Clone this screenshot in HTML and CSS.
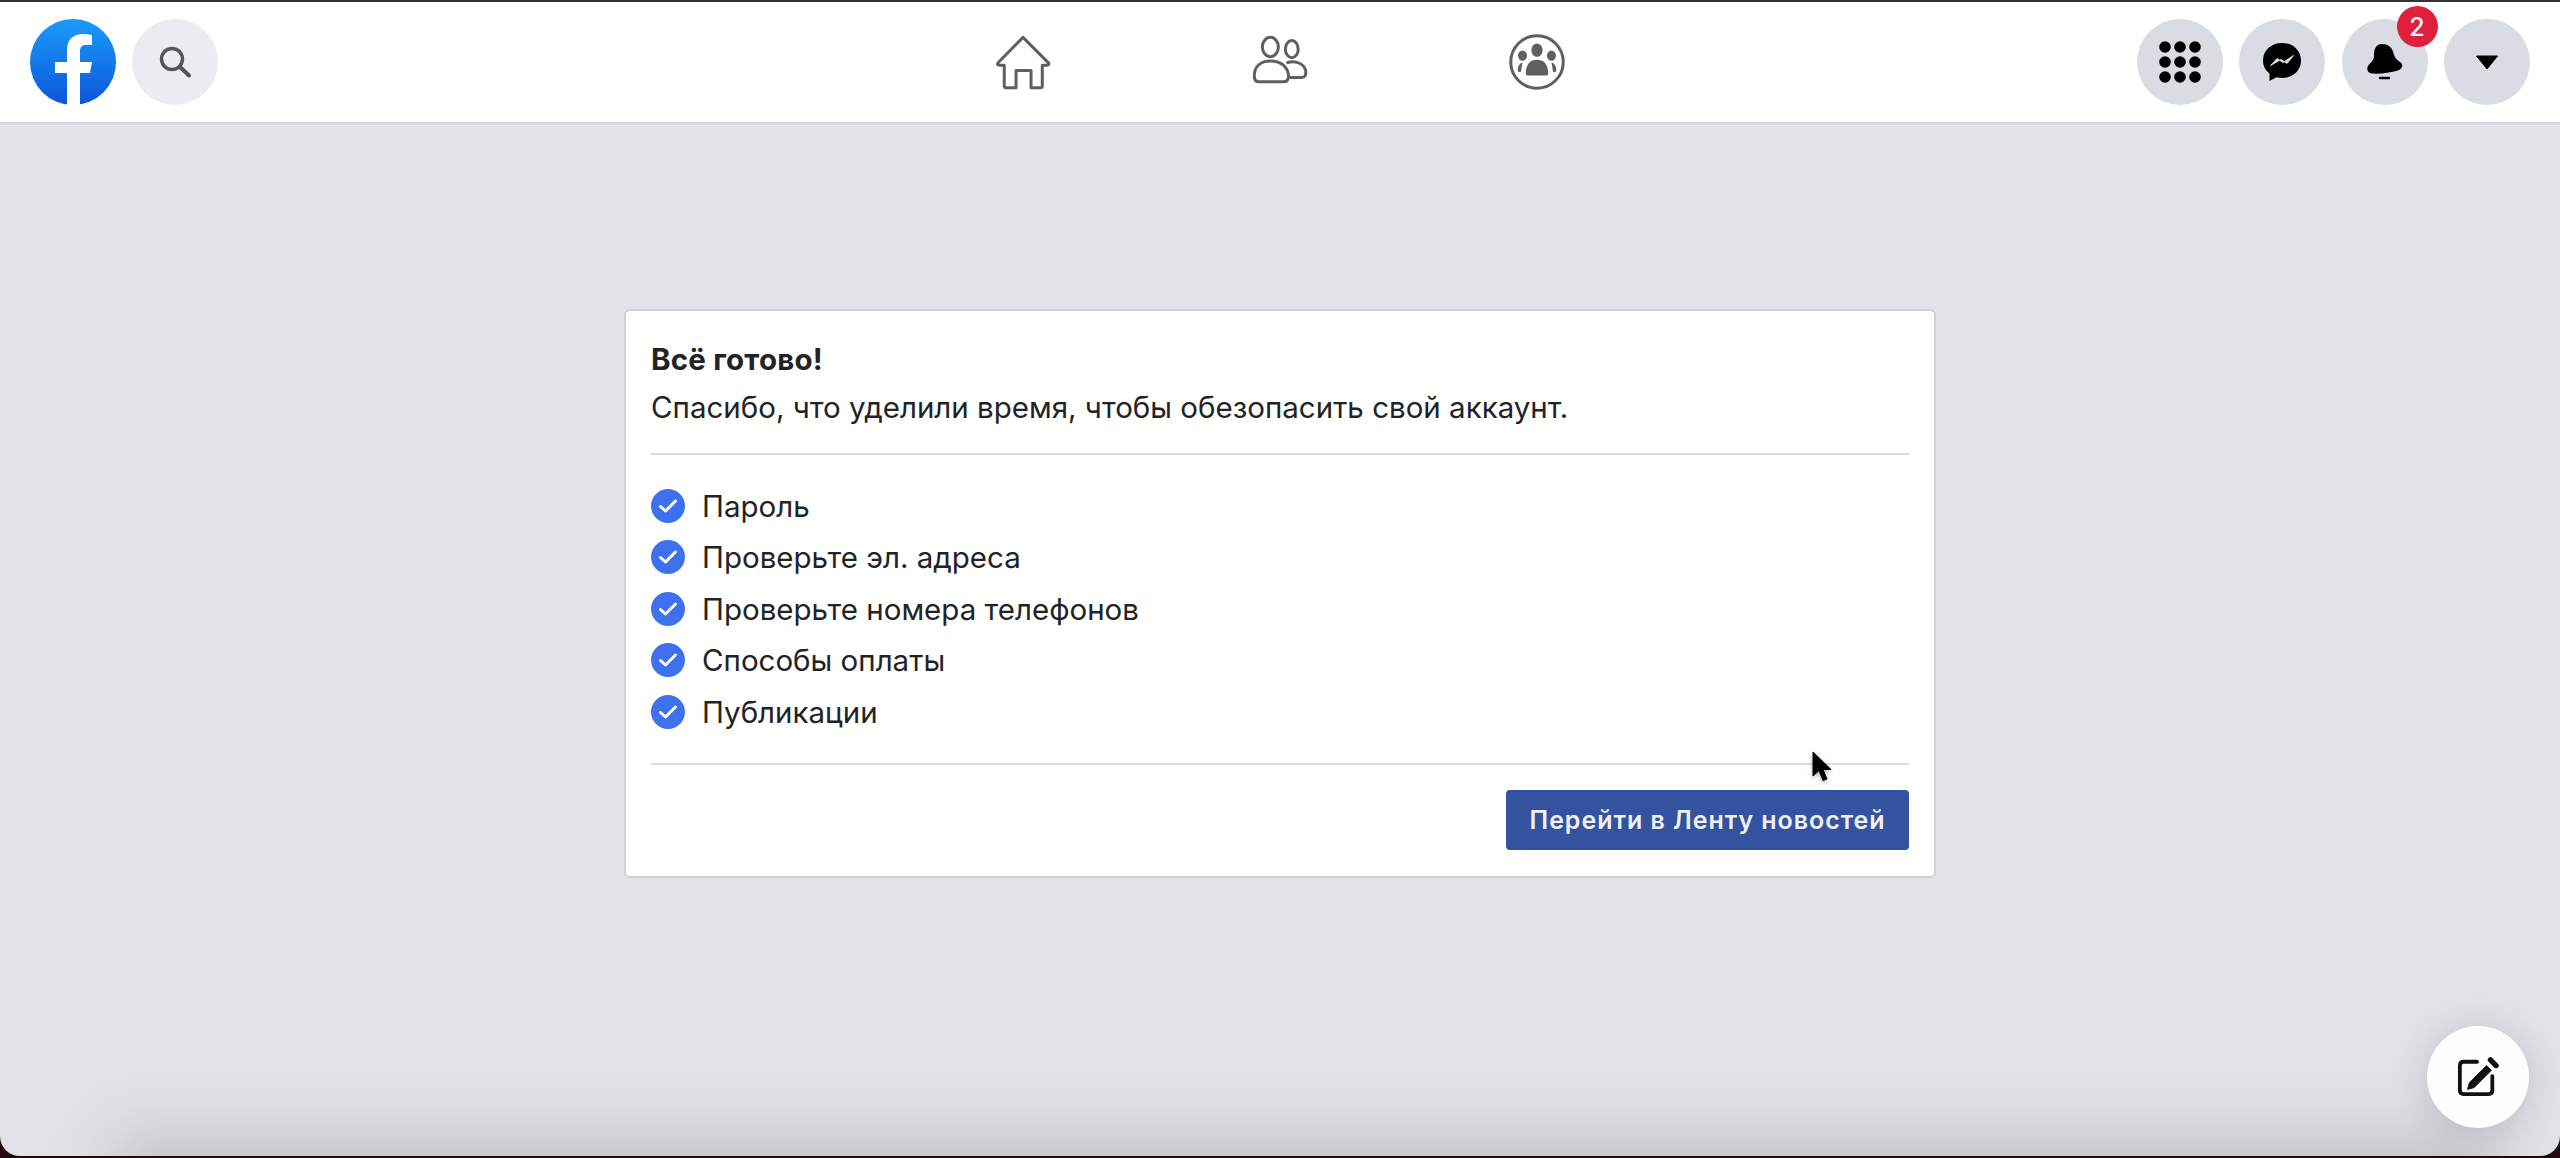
FILE: index.html
```html
<!DOCTYPE html>
<html lang="ru">
<head>
<meta charset="utf-8">
<title>Всё готово</title>
<link rel="stylesheet" href="styles.css">
</head>
<body>
<div class="window">
  <header class="topbar">
    <div class="left-group">
      <svg class="logo" viewBox="0 0 86 86" aria-hidden="true">
        <defs><linearGradient id="fbg" x1="0" y1="0" x2="0" y2="1"><stop offset="0" stop-color="#1a9cfb"/><stop offset="1" stop-color="#0d55d8"/></linearGradient></defs>
        <circle cx="43" cy="43" r="43" fill="url(#fbg)"/>
        <path d="M37 86V54H25V43H37V31C37 20 43.500 15 53 15C57 15 60 15.500 62 16V26H56C51.500 26 50 28.500 50 32V43H62L60 54H50V86Z" fill="#fff"/>
      </svg>
      <div class="round round-light">
        <svg class="ico-search" viewBox="0 0 36 36" aria-hidden="true"><circle cx="15" cy="15" r="10.500" fill="none" stroke="#555" stroke-width="3.400"/><path d="M23 23L32 31.500" stroke="#555" stroke-width="4" stroke-linecap="round"/></svg>
      </div>
    </div>
    <nav class="nav">
      <div class="nav-item">
        <svg class="ico-nav" viewBox="0 0 56 56" aria-hidden="true"><path d="M28 5L52 29Q52.500 31 50.500 31H46V50.500Q46 52 44.500 52H35.500V36H21.500V52H12Q10.500 52 10.500 50.500V31H6Q3.500 31 4.500 29Z" fill="none" stroke="#5f5f62" stroke-width="2.800" stroke-linejoin="round"/></svg>
      </div>
      <div class="nav-item">
        <svg class="ico-nav" viewBox="0 0 56 56" aria-hidden="true"><g fill="none" stroke="#5f5f62" stroke-width="2.800"><ellipse cx="19" cy="14" rx="7.500" ry="9"/><ellipse cx="39" cy="16" rx="6" ry="8"/><path d="M34 29C40 26.500 50 28 52 36Q53 42.500 48 42.500H37"/><path d="M4 41C4 32 10 27 19.500 27C29 27 35.500 33 36 41Q36 46.500 31 46.500H8.500Q4 46.500 4 41Z"/></g></svg>
      </div>
      <div class="nav-item">
        <svg class="ico-nav" viewBox="0 0 56 56" aria-hidden="true"><circle cx="28" cy="28" r="24.500" fill="none" stroke="#5f5f62" stroke-width="2.800"/><g fill="#5f5f62"><ellipse cx="28" cy="17" rx="5.200" ry="6.200"/><ellipse cx="14.500" cy="22" rx="4.200" ry="4.800"/><ellipse cx="41.500" cy="22" rx="4.200" ry="4.800"/><path d="M17.500 39C17.500 30 22 26 28 26C34 26 38.500 30 38.500 39Q38.500 40.500 36.500 40.500H19.500Q17.500 40.500 17.500 39Z"/><path d="M10 36C10 32 11.500 29.500 14.500 28.500L13 37Q10 38 10 36Z"/><path d="M46 36C46 32 44.500 29.500 41.500 28.500L43 37Q46 38 46 36Z"/></g></svg>
      </div>
    </nav>
    <div class="right-group">
      <div class="round">
        <svg class="ico-grid" viewBox="0 0 44 44" aria-hidden="true"><g fill="#000"><circle cx="7" cy="7" r="5.800"/><circle cx="22" cy="7" r="5.800"/><circle cx="37" cy="7" r="5.800"/><circle cx="7" cy="22" r="5.800"/><circle cx="22" cy="22" r="5.800"/><circle cx="37" cy="22" r="5.800"/><circle cx="7" cy="37" r="5.800"/><circle cx="22" cy="37" r="5.800"/><circle cx="37" cy="37" r="5.800"/></g></svg>
      </div>
      <div class="round">
        <svg class="ico-msg" viewBox="0 0 40 40" aria-hidden="true"><path d="M20 1C9 1 1 8.500 1 18.500C1 24 3.500 28.500 7.500 31.500V39L14.500 35.200C16.200 35.700 18 36 20 36C31 36 39 28.500 39 18.500C39 8.500 31 1 20 1Z" fill="#000"/><path d="M8.500 23.500L15 16.500L21 20.500L31.500 13.500L25 21.500L19 17.500Z" fill="#dadce3" stroke="#dadce3" stroke-linejoin="round"/></svg>
      </div>
      <div class="round has-badge">
        <svg class="ico-bell" viewBox="0 0 36 38" aria-hidden="true"><path d="M15 1C8.500 1 7 7 7 12C7 17 5 18.500 2 21.500C-1 25 0 30 5 30.500C13 31 23 30 31 27.500C36 25.500 36.500 21 33 19C29 16 27.500 14 26.500 10C25 4 20.500 1 15 1Z" fill="#000"/><path d="M13 35H22" stroke="#000" stroke-width="2.400" stroke-linecap="round"/></svg>
        <span class="badge">2</span>
      </div>
      <div class="round">
        <svg class="ico-caret" viewBox="0 0 24 15" aria-hidden="true"><path d="M1.500 1H22.500L12 14Z" fill="#000" stroke="#000" stroke-linejoin="round"/></svg>
      </div>
    </div>
  </header>

  <main class="content">
    <section class="card">
      <h1 class="card-title">Всё готово!</h1>
      <p class="card-sub">Спасибо, что уделили время, чтобы обезопасить свой аккаунт.</p>
      <ul class="checks">
        <li class="check"><svg class="tick" viewBox="0 0 34 34" aria-hidden="true"><circle cx="17" cy="17" r="17" fill="#3f71ee"/><path d="M9.500 17.500L14.500 22L24.500 12" fill="none" stroke="#fff" stroke-width="3" stroke-linecap="round" stroke-linejoin="round"/></svg>Пароль</li>
        <li class="check"><svg class="tick" viewBox="0 0 34 34" aria-hidden="true"><circle cx="17" cy="17" r="17" fill="#3f71ee"/><path d="M9.500 17.500L14.500 22L24.500 12" fill="none" stroke="#fff" stroke-width="3" stroke-linecap="round" stroke-linejoin="round"/></svg>Проверьте эл. адреса</li>
        <li class="check"><svg class="tick" viewBox="0 0 34 34" aria-hidden="true"><circle cx="17" cy="17" r="17" fill="#3f71ee"/><path d="M9.500 17.500L14.500 22L24.500 12" fill="none" stroke="#fff" stroke-width="3" stroke-linecap="round" stroke-linejoin="round"/></svg>Проверьте номера телефонов</li>
        <li class="check"><svg class="tick" viewBox="0 0 34 34" aria-hidden="true"><circle cx="17" cy="17" r="17" fill="#3f71ee"/><path d="M9.500 17.500L14.500 22L24.500 12" fill="none" stroke="#fff" stroke-width="3" stroke-linecap="round" stroke-linejoin="round"/></svg>Способы оплаты</li>
        <li class="check"><svg class="tick" viewBox="0 0 34 34" aria-hidden="true"><circle cx="17" cy="17" r="17" fill="#3f71ee"/><path d="M9.500 17.500L14.500 22L24.500 12" fill="none" stroke="#fff" stroke-width="3" stroke-linecap="round" stroke-linejoin="round"/></svg>Публикации</li>
      </ul>
      <div class="card-foot"><button class="cta" type="button">Перейти в Ленту новостей</button></div>
    </section>
  </main>

  <svg class="cursor" viewBox="0 0 22 32" aria-hidden="true"><path d="M1 1V25L7 19.500L11 29.500L15 28L11 18.500H19Z" fill="#000" stroke="#000" stroke-linejoin="round"/></svg>
  <div class="fab">
    <svg class="ico-edit" viewBox="0 0 44 44" aria-hidden="true"><path d="M21 6H7Q3 6 3 10V36Q3 40 7 40H33Q37 40 37 36V21" fill="none" stroke="#111" stroke-width="4" stroke-linecap="round"/><path d="M31 10L13 28L11 35L18 33L36 15Z" fill="#111" stroke="#111" stroke-width="1" stroke-linejoin="round"/><path d="M35 4L41 10" stroke="#111" stroke-width="5.500" stroke-linecap="round"/></svg>
  </div>
</div>
</body>
</html>
```

FILE: styles.css
```css
* { box-sizing: border-box; }
html, body { margin: 0; height: 100%; }
body {
  background: #24060f;
  font-family: "Inter", "Liberation Sans", sans-serif;
  color: #212327;
  overflow: hidden;
}
.window {
  position: relative;
  width: 2560px;
  height: 1156px;
  background: #e1e3e8;
  border-radius: 0 0 20px 20px;
  overflow: hidden;
  display: flex;
  flex-direction: column;
}
.window::after {
  content: "";
  position: absolute;
  left: 110px;
  right: 60px;
  bottom: -66px;
  height: 90px;
  background: rgba(0, 0, 0, .13);
  filter: blur(30px);
  pointer-events: none;
}
.topbar {
  height: 122px;
  flex: none;
  border-top: 2px solid #333;
  background: #fff;
  display: grid;
  grid-template-columns: 1fr auto 1fr;
  align-items: center;
  padding: 0 30px;
  box-shadow: 0 1px 3px rgba(0, 0, 0, .12);
  position: relative;
  z-index: 1;
}
.left-group, .right-group { display: flex; align-items: center; }
.left-group { gap: 16px; }
.right-group { gap: 16.500px; justify-content: flex-end; }
.logo { width: 86px; height: 86px; display: block; }
.round {
  width: 86px;
  height: 86px;
  border-radius: 50%;
  background: #dadce3;
  display: flex;
  align-items: center;
  justify-content: center;
  position: relative;
}
.round-light { background: #ebecf1; }
.ico-search { width: 36px; height: 36px; }
.nav { display: flex; }
.nav-item { width: 257px; display: flex; justify-content: center; align-items: center; }
.ico-nav { width: 60px; height: 60px; }
.ico-grid { width: 44px; height: 44px; }
.ico-msg { width: 40px; height: 40px; }
.ico-bell { width: 36px; height: 38px; }
.ico-caret { width: 24px; height: 15px; }
.badge {
  position: absolute;
  left: 55px;
  top: -13px;
  width: 41px;
  height: 41px;
  border-radius: 50%;
  background: #e01f3d;
  color: #f6f6f8;
  font-size: 25px;
  font-weight: 500;
  display: flex;
  align-items: center;
  justify-content: center;
}
.content { flex: 1; display: flex; justify-content: center; align-items: flex-start; padding-top: 187px; }
.card {
  width: 1312px;
  height: 569px;
  background: #fefefd;
  border: 2px solid #cfd1d7;
  border-radius: 6px;
  padding: 26px 25px 0;
}
.card-title { margin: 0; font-size: 29.500px; line-height: 44px; font-weight: 700; letter-spacing: .2px; }
.card-sub {
  margin: 4px 0 0;
  font-size: 29.500px;
  line-height: 44px;
  font-weight: 400;
  padding-bottom: 24px;
  border-bottom: 2px solid #d9dade;
}
.checks {
  list-style: none;
  margin: 0;
  padding: 25px 0 25.500px;
  border-bottom: 2px solid #d9dade;
}
.check {
  height: 51.500px;
  display: flex;
  align-items: center;
  gap: 17px;
  font-size: 29.500px;
}
.tick { width: 34px; height: 34px; flex: none; }
.card-foot { display: flex; justify-content: flex-end; padding-top: 25px; }
.cta {
  width: 403px;
  height: 60px;
  background: #34539e;
  color: #eef0f6;
  border: 0;
  border-radius: 4px;
  font-family: inherit;
  font-size: 25px;
  font-weight: 600;
  letter-spacing: .95px;
  padding: 0;
}
.cursor { position: absolute; left: 1812px; top: 751px; width: 22px; height: 32px; filter: drop-shadow(0 2px 2px rgba(0,0,0,.3)); }
.fab {
  position: absolute;
  left: 2427px;
  top: 1026px;
  width: 102px;
  height: 102px;
  border-radius: 50%;
  background: #fdfdfd;
  box-shadow: 0 4px 40px rgba(0, 0, 0, .16);
  display: flex;
  align-items: center;
  justify-content: center;
  z-index: 2;
}
.ico-edit { width: 42px; height: 42px; }
```
